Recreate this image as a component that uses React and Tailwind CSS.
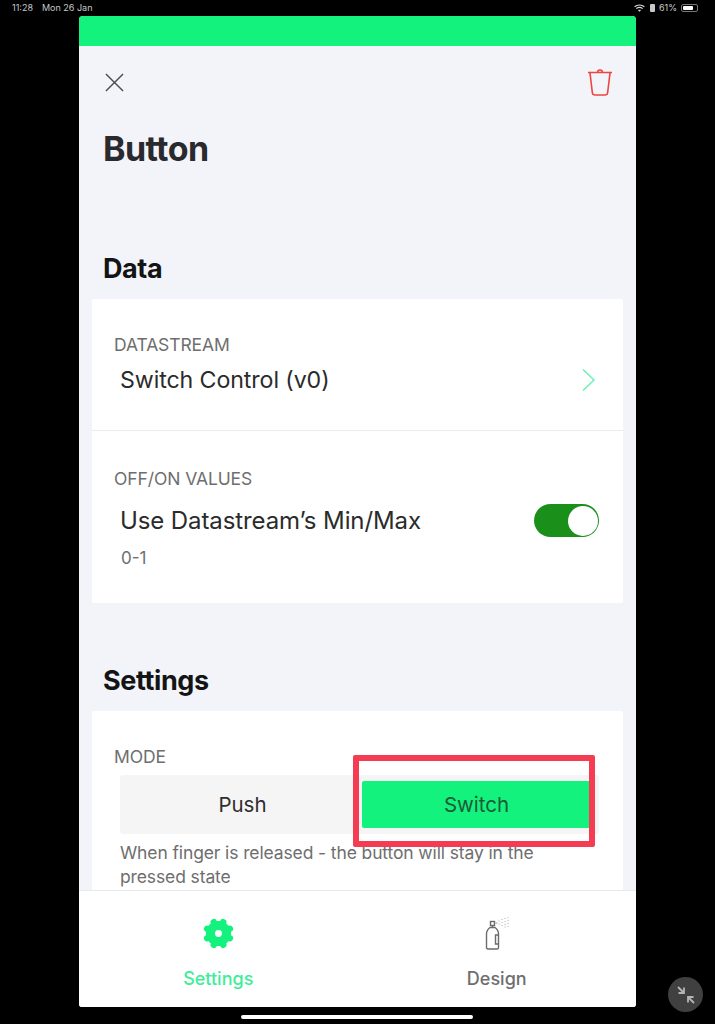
import React from 'react';

const Label = ({ children, className = '' }) => (
  <p className={`text-[17.5px] leading-5 tracking-[-0.1px] text-[#6e6e6e] ${className}`}>{children}</p>
);

const Heading = ({ children, className = '' }) => (
  <h2 className={`px-6 text-[27px] leading-8 font-bold tracking-[-0.4px] text-[#141414] ${className}`}>{children}</h2>
);

const TrashIcon = () => (
  <svg width="26" height="30" viewBox="0 0 26 30" fill="none" stroke="#f0423f" strokeWidth="1.6">
    <path d="M1 5.500h24" />
    <path d="M10.500 5.500c0-3.400 5-3.400 5 0" />
    <path d="M3 6l2.400 20c.2 1.200 1 2 2.200 2h10.800c1.200 0 2-.8 2.200-2L23 6" />
  </svg>
);

const GearIcon = () => (
  <svg width="31" height="31" viewBox="0 0 32 32">
    <circle cx="16" cy="16" r="13" fill="#14f27e" />
    {[22.5, 67.5, 112.5, 157.5, 202.5, 247.5, 292.5, 337.5].map((deg) => (
      <circle key={deg} cx="16" cy="3.400" r="3.400" fill="#14f27e" transform={`rotate(${deg} 16 16)`} />
    ))}
    <circle cx="16" cy="16" r="3.600" fill="#fff" />
  </svg>
);

const SprayIcon = () => (
  <svg width="24" height="33" viewBox="0 0 24 33" fill="none" stroke="#6b6b6b" strokeWidth="1.400">
    <rect x="5.500" y="4.500" width="4" height="4" />
    <path d="M7.500 8.500v2" />
    <path d="M1.500 17c0-3 1.500-5 3.500-6.500h5c2 1.500 3.500 3.500 3.500 6.500v13.500c0 1-.5 1.500-1.500 1.500H3c-1 0-1.500-.5-1.500-1.500z" />
    <path d="M13.500 18h-3v9h3" />
    <path
      d="M11 6h1M14 4v.01M14 7v.01M17 2.500v.01M17 5.500v.01M17 8.500v.01M20 1.500v.01M20 4.500v.01M20 7.500v.01M20 10v.01M23 .8v.01M23 3.500v.01M23 6.500v.01M23 9.500v.01"
      strokeWidth="1"
      stroke="#9a9a9a"
      strokeLinecap="round"
    />
  </svg>
);

export default function App() {
  return (
    <div className="relative flex h-[1024px] w-[715px] flex-col overflow-hidden bg-black font-['Inter',sans-serif]">
      {/* status bar */}
      <div className="flex h-4 items-center justify-between pl-3 pr-[17px] text-[9px] text-[#c8c8c8]">
        <div className="flex gap-[9px]">
          <span>11:28</span>
          <span>Mon 26 Jan</span>
        </div>
        <div className="flex items-center gap-[3px]">
          <svg width="11" height="8" viewBox="0 0 11 8" fill="none" stroke="#d8d8d8" strokeWidth="1.200">
            <path d="M.6 2.800c2.800-2.400 7-2.400 9.800 0M2.300 4.600c1.800-1.500 4.600-1.500 6.400 0" />
            <path d="M5.500 7.800 4 6.200c.9-.6 2.100-.6 3 0z" fill="#d8d8d8" stroke="none" />
          </svg>
          <span className="ml-[2px] h-2 w-[5px] rounded-[1px] bg-[#c8c8c8]" />
          <span className="ml-[1px]">61%</span>
          <span className="ml-[1px] flex h-2 w-[17px] rounded-[2px] border border-[#777] p-px">
            <span className="h-full w-[10px] rounded-[1px] bg-white" />
          </span>
        </div>
      </div>

      {/* panel */}
      <div className="ml-[79px] flex h-[991px] w-[557px] flex-col overflow-hidden rounded-t-[4px] rounded-b-[3px] bg-[#f2f4f9]">
        <div className="h-[30px] shrink-0 bg-[#14f27e]" />

        <div className="min-h-0 flex-1 overflow-hidden">
          <div className="mt-[21px] flex h-[30px] items-center justify-between pl-[26px] pr-[23px]">
            <svg width="19" height="19" viewBox="0 0 20 20" stroke="#4b4b4f" strokeWidth="1.500">
              <path d="M1 1l18 18M19 1 1 19" />
            </svg>
            <TrashIcon />
          </div>

          <h1 className="mt-[32px] px-6 text-[34px] leading-10 font-bold tracking-[-0.6px] text-[#2a2a2e]">Button</h1>

          <Heading className="mt-[84px]">Data</Heading>

          {/* data card */}
          <div className="mx-[13px] mt-[14px] rounded-[2px] bg-white">
            <div className="flex h-[132px] flex-col border-b border-[#ececf0] pt-[36px] pl-[22px] pr-[27px]">
              <Label>DATASTREAM</Label>
              <div className="mt-[9px] flex items-center justify-between pl-[6px]">
                <span className="text-[23.2px] leading-8 tracking-[-0.1px] text-[#2b2b2b]">Switch Control (v0)</span>
                <svg width="15" height="24" viewBox="0 0 15 24" fill="none" stroke="#6cf0b4" strokeWidth="1.500">
                  <path d="M2 1.500 13 12 2 22.500" />
                </svg>
              </div>
            </div>
            <div className="h-[172px] pt-[38px] pl-[22px] pr-6">
              <Label>OFF/ON VALUES</Label>
              <div className="mt-[15px] flex items-center justify-between pl-[6px]">
                <span className="text-[24px] leading-8 tracking-[-0.1px] text-[#2b2b2b]">Use Datastream’s Min/Max</span>
                <span className="flex h-[33px] w-[65px] items-center justify-end rounded-full bg-[#1a8f1a] pr-px">
                  <span className="h-[30px] w-[30px] rounded-full bg-white" />
                </span>
              </div>
              <p className="mt-[11px] pl-[7px] text-[17px] leading-5 text-[#6e6e6e]">0-1</p>
            </div>
          </div>

          <Heading className="mt-[62px]">Settings</Heading>

          {/* settings card */}
          <div className="mx-[13px] mt-[14px] h-[200px] rounded-[2px] bg-white pt-9 pl-[22px] pr-6">
            <Label>MODE</Label>
            <div className="mt-[8px] ml-[6px] flex h-[59px] w-[479px] items-center rounded-[3px] bg-[#f5f5f5] pr-[8px]">
              <span className="w-[242px] pt-px pl-[3px] text-center text-[20.5px] text-[#2e2e2e]">Push</span>
              <span className="flex h-[47px] flex-1 items-center justify-center rounded-[2px] bg-[#14f27e] pt-px text-[20.5px] text-[#1c5a38]">Switch</span>
            </div>
            <p className="mt-[7px] ml-[6px] w-[460px] text-[17.5px] leading-6 tracking-[-0.12px] text-[#6e6e6e]">
              When finger is released - the button will stay in the pressed state
            </p>
          </div>
        </div>

        {/* tab bar */}
        <div className="grid h-[117px] shrink-0 grid-cols-2 border-t border-[#e9e9ec] bg-white">
          <div className="flex flex-col items-center pt-[27px]">
            <GearIcon />
            <span className="mt-[18px] text-[18px] leading-6 font-medium text-[#3fee98]">Settings</span>
          </div>
          <div className="flex flex-col items-center pt-[26px]">
            <SprayIcon />
            <span className="mt-[17px] text-[18px] leading-6 font-medium text-[#6e6e6e]">Design</span>
          </div>
        </div>
      </div>

      {/* home indicator */}
      <div className="mt-2 ml-[241px] h-1 w-[232px] rounded-full bg-white" />

      {/* annotation drawn over the screenshot */}
      <div className="absolute top-[755px] left-[353px] h-[92px] w-[242px] rounded-[2px] border-[6px] border-[#f43c52]" />

      {/* floating button */}
      <div className="absolute top-[977px] left-[668px] flex h-[35px] w-[35px] items-center justify-center rounded-full bg-[#404040]">
        <svg width="20" height="20" viewBox="0 0 20 20" fill="none" stroke="#b5b5b5" strokeWidth="1.800">
          <path d="M2 2l6 6M8 2.500V8H2.500M18 18l-6-6M12 17.500V12h5.500" />
        </svg>
      </div>
    </div>
  );
}
